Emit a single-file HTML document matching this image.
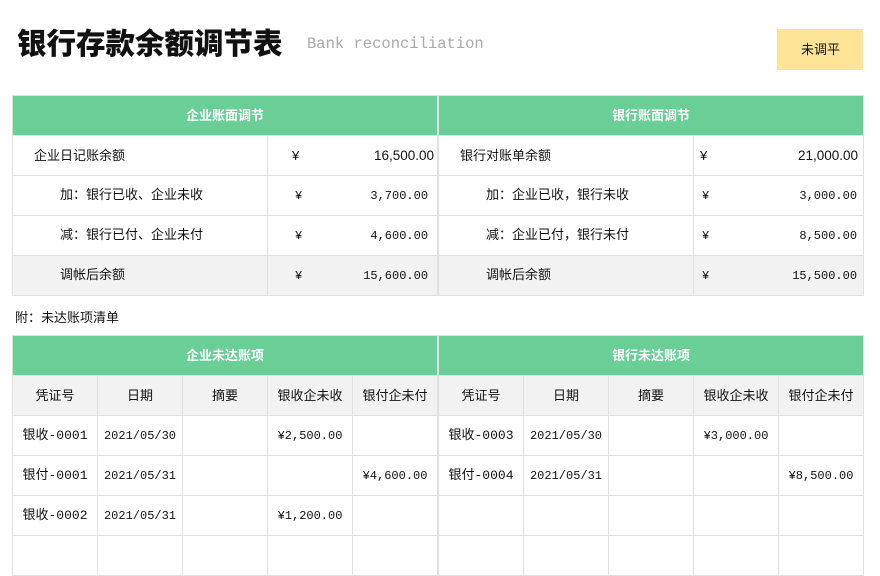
<!DOCTYPE html>
<html><head><meta charset="utf-8"><style>
*{margin:0;padding:0;box-sizing:border-box}
body{width:880px;height:554px;background:#fff;position:relative;overflow:hidden;font-family:"Liberation Sans","Noto Sans CJK SC",sans-serif;font-size:13px;color:#111}
.t{position:absolute;border-collapse:collapse;table-layout:fixed}
.t td{border:1px solid #e0e0e0;height:40px;line-height:38px;padding:0;white-space:nowrap;vertical-align:middle}
.h td{background:#69cf97;color:#fff;font-weight:bold;text-align:center}
.g td{background:#f2f2f2}
.m{font-family:"Liberation Mono","Noto Sans CJK SC",monospace;font-size:13px}
.n{font-family:"Liberation Mono",monospace;font-size:12px}
.c{text-align:center}
</style></head><body>
<div style="position:absolute;left:17px;top:22px;font-size:29.5px;font-weight:900;font-family:'Noto Sans CJK SC',sans-serif;line-height:40px">银行存款余额调节表</div>
<div style="position:absolute;left:307px;top:35px;font-family:'Liberation Mono',monospace;font-size:15.5px;color:#aaa">Bank reconciliation</div>
<div style="position:absolute;left:777px;top:29px;width:86px;height:41px;background:#fee496;border-left:1px solid #ddd;text-align:center;line-height:41px;font-size:13px">未调平</div>

<table class="t" style="left:12px;top:95px;width:425px">
<colgroup><col style="width:255px"><col style="width:170px"></colgroup>
<tr class="h"><td colspan="2">企业账面调节</td></tr>
<tr><td style="padding-left:21px">企业日记账余额</td><td><span style="float:left;margin-left:24px">¥</span><span style="float:right;margin-right:3px;font-size:13.5px">16,500.00</span></td></tr>
<tr class="m"><td style="padding-left:47px">加：银行已收、企业未收</td><td class="n"><span style="float:left;margin-left:27px">¥</span><span style="float:right;margin-right:9px">3,700.00</span></td></tr>
<tr class="m"><td style="padding-left:47px">减：银行已付、企业未付</td><td class="n"><span style="float:left;margin-left:27px">¥</span><span style="float:right;margin-right:9px">4,600.00</span></td></tr>
<tr class="g m"><td style="padding-left:47px">调帐后余额</td><td class="n"><span style="float:left;margin-left:27px">¥</span><span style="float:right;margin-right:9px">15,600.00</span></td></tr>
</table>
<table class="t" style="left:438px;top:95px;width:425px">
<colgroup><col style="width:255px"><col style="width:170px"></colgroup>
<tr class="h"><td colspan="2">银行账面调节</td></tr>
<tr><td style="padding-left:21px">银行对账单余额</td><td><span style="float:left;margin-left:6px">¥</span><span style="float:right;margin-right:5px;font-size:13.5px">21,000.00</span></td></tr>
<tr class="m"><td style="padding-left:47px">加：企业已收，银行未收</td><td class="n"><span style="float:left;margin-left:8px">¥</span><span style="float:right;margin-right:6px">3,000.00</span></td></tr>
<tr class="m"><td style="padding-left:47px">减：企业已付，银行未付</td><td class="n"><span style="float:left;margin-left:8px">¥</span><span style="float:right;margin-right:6px">8,500.00</span></td></tr>
<tr class="g m"><td style="padding-left:47px">调帐后余额</td><td class="n"><span style="float:left;margin-left:8px">¥</span><span style="float:right;margin-right:6px">15,500.00</span></td></tr>
</table>

<div style="position:absolute;left:15px;top:307px;font-size:13px">附：未达账项清单</div>

<table class="t" style="left:12px;top:335px;width:425px">
<colgroup><col style="width:85px"><col style="width:85px"><col style="width:85px"><col style="width:85px"><col style="width:85px"></colgroup>
<tr class="h"><td colspan="5">企业未达账项</td></tr>
<tr class="g c"><td>凭证号</td><td>日期</td><td>摘要</td><td>银收企未收</td><td>银付企未付</td></tr>
<tr class="c m"><td>银收-0001</td><td class="n">2021/05/30</td><td></td><td class="n">¥2,500.00</td><td></td></tr>
<tr class="c m"><td>银付-0001</td><td class="n">2021/05/31</td><td></td><td></td><td class="n">¥4,600.00</td></tr>
<tr class="c m"><td>银收-0002</td><td class="n">2021/05/31</td><td></td><td class="n">¥1,200.00</td><td></td></tr>
<tr><td></td><td></td><td></td><td></td><td></td></tr>
</table>
<table class="t" style="left:438px;top:335px;width:425px">
<colgroup><col style="width:85px"><col style="width:85px"><col style="width:85px"><col style="width:85px"><col style="width:85px"></colgroup>
<tr class="h"><td colspan="5">银行未达账项</td></tr>
<tr class="g c"><td>凭证号</td><td>日期</td><td>摘要</td><td>银收企未收</td><td>银付企未付</td></tr>
<tr class="c m"><td>银收-0003</td><td class="n">2021/05/30</td><td></td><td class="n">¥3,000.00</td><td></td></tr>
<tr class="c m"><td>银付-0004</td><td class="n">2021/05/31</td><td></td><td></td><td class="n">¥8,500.00</td></tr>
<tr><td></td><td></td><td></td><td></td><td></td></tr>
<tr><td></td><td></td><td></td><td></td><td></td></tr>
</table>
</body></html>
